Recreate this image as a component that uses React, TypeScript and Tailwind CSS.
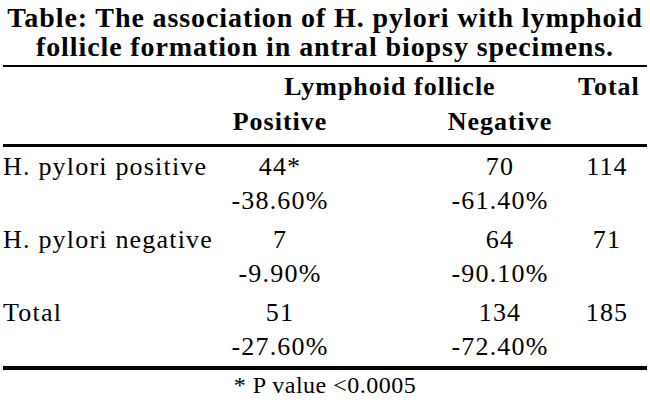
const ROWS = [
  { label: 'H. pylori positive', pos: '44*', posPct: '-38.60%', neg: '70', negPct: '-61.40%', total: '114' },
  { label: 'H. pylori negative', pos: '7', posPct: '-9.90%', neg: '64', negPct: '-90.10%', total: '71' },
  { label: 'Total', pos: '51', posPct: '-27.60%', neg: '134', negPct: '-72.40%', total: '185' },
];

// label | positive | spacer | negative | total
const GRID = 'grid grid-cols-[199px_156px_64px_156px_58px]';

export default function App() {
  return (
    <div className="w-[650px] h-[403px] bg-white text-black font-['Liberation_Serif',serif] overflow-hidden">
      <h1 className="pt-[3px] mb-[4px] text-center font-bold text-[28px] leading-[29px] tracking-[0.9px] whitespace-nowrap">
        Table: The association of H. pylori with lymphoid
        <br />
        follicle formation in antral biopsy specimens.
      </h1>

      <div className="px-[3px]">
        <div className="border-t-[2px] border-black pt-[2px] pb-[5px] font-bold text-[26px] leading-[35px] tracking-[1px]">
          <div className={GRID}>
            <div />
            <div className="col-span-3 text-center">Lymphoid follicle</div>
            <div className="text-center">Total</div>
          </div>
          <div className={GRID}>
            <div />
            <div className="text-center">Positive</div>
            <div />
            <div className="text-center">Negative</div>
            <div />
          </div>
        </div>

        <div className="border-t-[3px] border-black text-[26px] leading-[34px] tracking-[1.2px]">
          {ROWS.map((r) => (
            <div key={r.label} className={`${GRID} pt-[3px] pb-[2px]`}>
              <div className="whitespace-nowrap">{r.label}</div>
              <div className="text-center">{r.pos}</div>
              <div />
              <div className="text-center">{r.neg}</div>
              <div className="text-center">{r.total}</div>
              <div />
              <div className="text-center">{r.posPct}</div>
              <div />
              <div className="text-center">{r.negPct}</div>
              <div />
            </div>
          ))}
        </div>

        <div className="border-t-[4px] border-black text-center text-[24px] leading-[30px] tracking-[0.5px]">
          * P value &lt;0.0005
        </div>
      </div>
    </div>
  );
}
